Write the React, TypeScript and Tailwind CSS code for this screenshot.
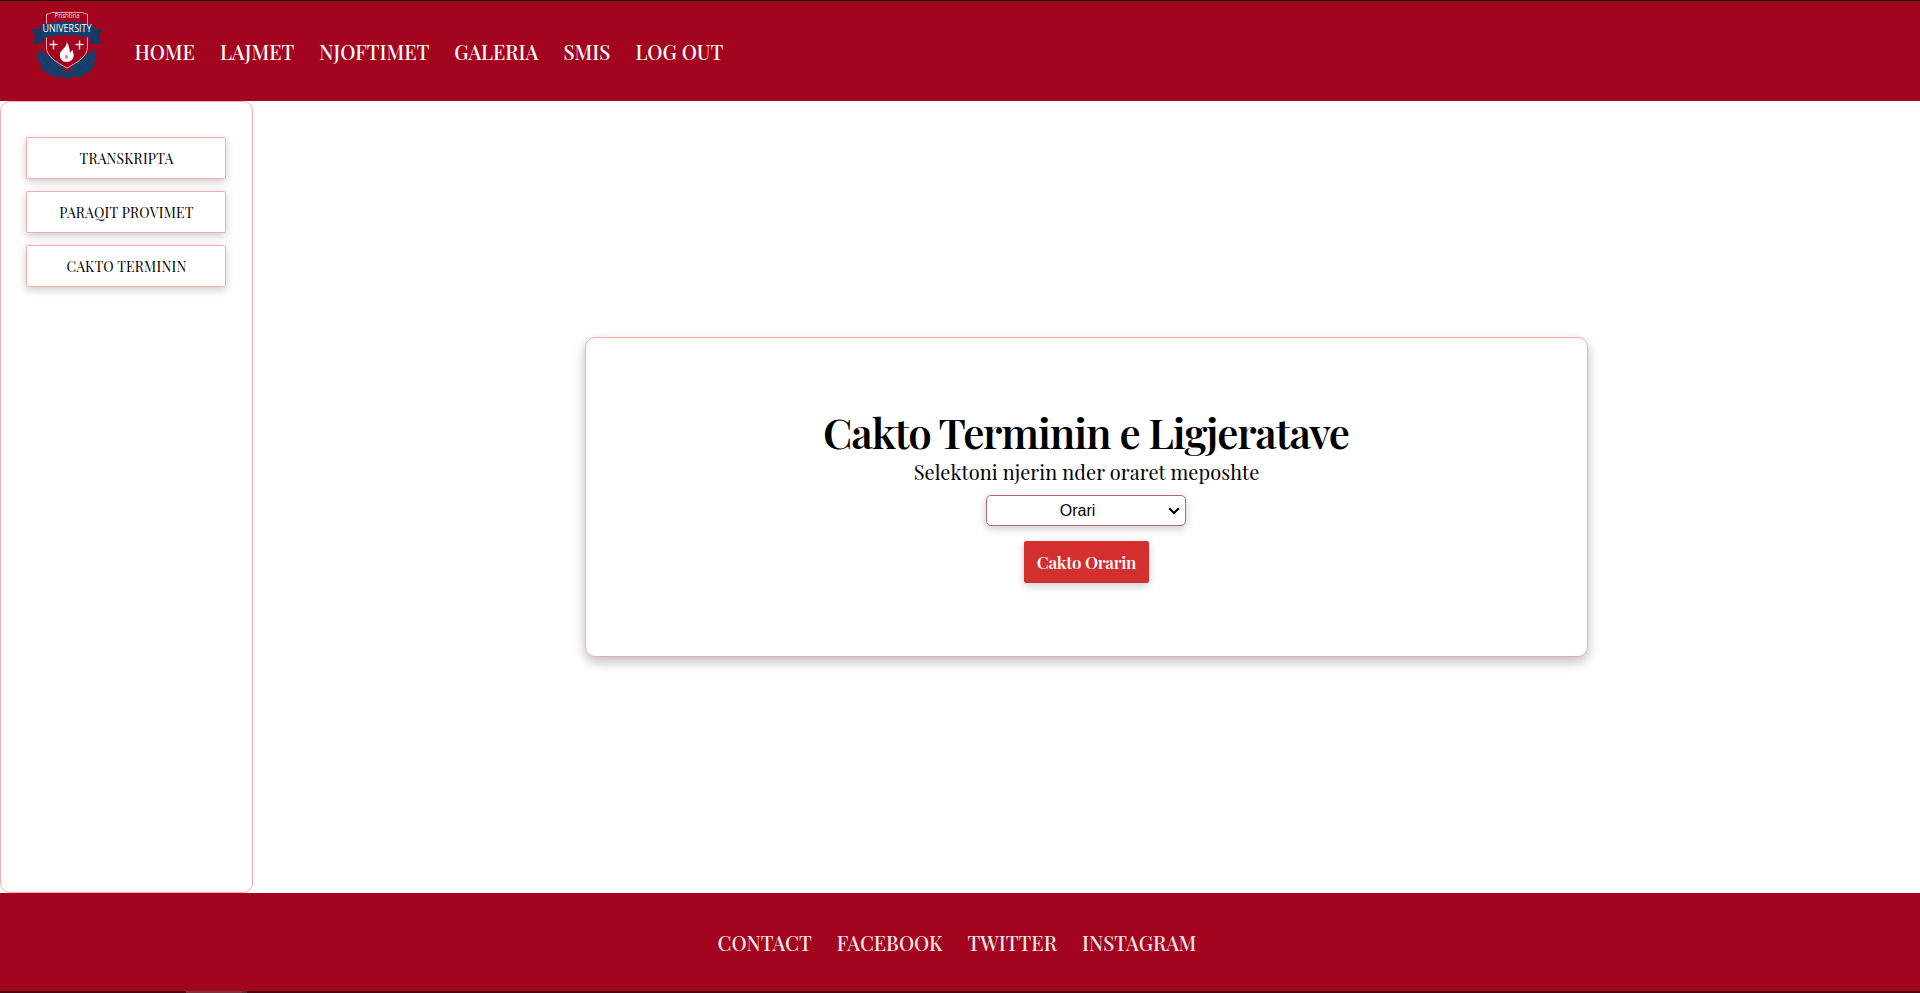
import React from "react";

const serif = "font-['Playfair_Display','Liberation_Serif',serif]";

const navLinks = ["HOME", "LAJMET", "NJOFTIMET", "GALERIA", "SMIS", "LOG OUT"];
const footerLinks = ["CONTACT", "FACEBOOK", "TWITTER", "INSTAGRAM"];
const sideLinks = ["TRANSKRIPTA", "PARAQIT PROVIMET", "CAKTO TERMININ"];

function Logo() {
  return (
    <svg width="76" height="74" viewBox="0 0 76 74" className="block">
      <g fill="#14406b">
        <path d="M9.500 40c-2.500 6-2 11 1 15-.5 4 2.500 7 7 9 4 4 9 5 14 3.500L36 70l2-3C36 61 32 58 28 54 26 47 15 47 9.500 40z" />
        <path d="M64.500 40c2.500 6 2 11-1 15 .5 4-2.500 7-7 9-4 4-9 5-14 3.500L38 70l-2-3c2-6 6-9 10-13 2-7 13-7 18.500-14z" />
      </g>
      <path d="M13 48q7 13 21 18M61 48q-7 13-21 18" stroke="#4a2147" strokeWidth="0.6" fill="none" />
      <path
        d="M16.500 5q4 0 5-1.500h31q1 1.500 5 1.500v33c0 10-10 15-20.500 21-10.500-6-20.500-11-20.500-21z"
        fill="#a3051f"
        stroke="#e2a3af"
        strokeWidth="1"
      />
      <path d="M1 20h13v14l-12 1 3.500-7.500zM73 20H60v14l12 1-3.500-7.500z" fill="#123a62" />
      <path d="M10 16q27-7 54 0l-3 13q-24-6-48 0z" fill="#14406b" />
      <text x="37" y="8.800" textAnchor="middle" fontSize="6.400" fill="#f3dfe3" fontFamily="Open Sans, sans-serif" textLength="25" lengthAdjust="spacingAndGlyphs">
        Prishtina
      </text>
      <text x="37" y="22.500" textAnchor="middle" fontSize="10" fill="#fff" fontFamily="Open Sans, sans-serif" textLength="49" lengthAdjust="spacingAndGlyphs">
        UNIVERSITY
      </text>
      <path d="M23.500 31.500v9M19.500 35.500h8M49.500 31.500v9M45.500 35.500h8" stroke="#f6e3e6" strokeWidth="1.400" />
      <path
        d="M36.500 32.500c1.500 5-5.500 8-6.500 12-1 5 2.500 8.500 6.500 8.500s8-3 7-8c-.3-1.500-.5-2-1-4-1.500 1-1.500 2-2.500 3-.5-4-1-8-3.500-11.500z"
        fill="#fff"
      />
      <path d="M36 45c1 1.500 2.500 2 2.300 3.800-.5 1.200-3 1.200-3.500 0-.4-1.300.8-2 1.200-3.800z" fill="#d88a97" />
    </svg>
  );
}

export default function App() {
  return (
    <div className={`flex h-[993px] w-full flex-col overflow-hidden bg-white text-black ${serif}`}>
      <header className="flex h-[101px] shrink-0 border-t border-[#1d0a0e] bg-[#a3051f] pl-[30px]">
        <div className="pt-2">
          <Logo />
        </div>
        <nav className="flex h-[101px] items-center gap-[25px] pl-[28.5px] text-[20px] font-medium leading-none text-white">
          {navLinks.map((label) => (
            <a key={label} href="#" className="whitespace-nowrap">
              {label}
            </a>
          ))}
        </nav>
      </header>

      <div className="flex h-[792px] shrink-0">
        <aside className="flex w-[253px] shrink-0 flex-col items-center gap-3 rounded-[10px] border border-[#ffaaaa] pr-px pt-[35px]">
          {sideLinks.map((label) => (
            <button
              key={label}
              className="flex h-[42px] w-[200px] items-center justify-center whitespace-nowrap rounded-[2px] border border-[#ffaaaa] bg-white pl-px pt-px text-[14px] leading-none tracking-[0.2px] shadow-[0_3px_8px_rgba(0,0,0,0.2)]"
            >
              {label}
            </button>
          ))}
        </aside>

        <main className="flex flex-1 items-center justify-center">
          <section className="flex h-[320px] w-[1003px] flex-col items-center rounded-[10px] border border-[#ffaaaa] bg-white pt-[68px] shadow-[0_5px_12px_rgba(0,0,0,0.26)]">
            <h1 className="flex h-[52px] items-center whitespace-nowrap pr-px text-[42px] font-semibold leading-none tracking-[-1.1px]">
              Cakto Terminin e Ligjeratave
            </h1>
            <p className="flex h-[28px] items-center whitespace-nowrap text-[20px] leading-none tracking-[0.07px]">
              Selektoni njerin nder oraret meposhte
            </p>
            <button className="mr-px mt-[9px] flex h-[31px] w-[200px] shrink-0 items-center rounded-[5px] border border-[#b9646b] bg-white px-[5px] font-['Liberation_Sans',Arial,sans-serif] text-base leading-none shadow-[0_3px_8px_rgba(0,0,0,0.2)]">
              <span className="flex-1 pr-[5px] text-center">Orari</span>
              <svg width="12" height="8" viewBox="0 0 12 8" className="block">
                <path d="M1.200 1.200L6 6l4.800-4.800" fill="none" stroke="#000" strokeWidth="2" />
              </svg>
            </button>
            <button className="mt-[15px] flex h-[42px] w-[125px] shrink-0 items-center justify-center whitespace-nowrap rounded-[2px] bg-[#d32f2f] pt-px text-[17px] font-semibold leading-none tracking-[-0.3px] text-white shadow-[0_3px_8px_rgba(0,0,0,0.2)]">
              Cakto Orarin
            </button>
          </section>
        </main>
      </div>

      <footer className="flex h-[98px] shrink-0 items-center justify-center gap-[25px] bg-[#a3051f] pr-[6px] pt-[2px] text-[20px] font-medium leading-none text-[#efe6e8]">
        {footerLinks.map((label) => (
          <a key={label} href="#" className="whitespace-nowrap">
            {label}
          </a>
        ))}
      </footer>
      <div className="flex h-[2px] shrink-0 bg-[#4a0512] pl-[186px]">
        <div className="h-full w-[56px] bg-[#7a3540]" />
        <div className="h-full w-[5px] bg-[#5a2a33]" />
      </div>
    </div>
  );
}
